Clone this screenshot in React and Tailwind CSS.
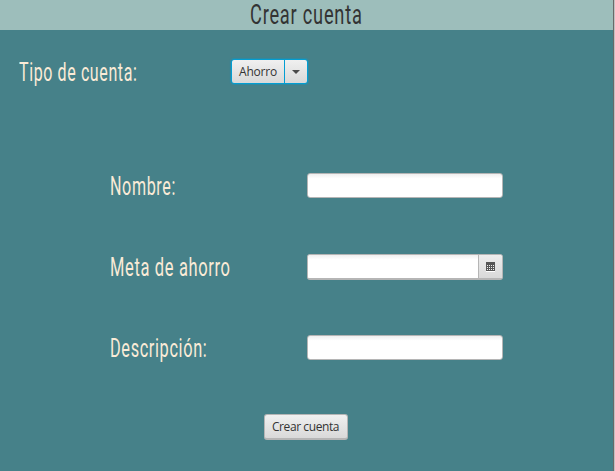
import React from "react";

const FIELD =
  "block h-[25px] w-[196px] rounded-[3px] border border-[#b5b5b5] bg-linear-to-b from-[#efefef] from-0% via-white via-20% to-white outline-none";

function Label({ children, scale }) {
  return (
    <span
      className={`inline-block origin-left whitespace-nowrap font-['Roboto',sans-serif] text-[26px] leading-[30px] tracking-[1px] text-[#faebd7] ${scale}`}
    >
      {children}
    </span>
  );
}

function CalendarIcon() {
  return (
    <svg width="9" height="10" viewBox="0 0 9 10" shapeRendering="crispEdges">
      <rect width="9" height="9" fill="#555" />
      <rect y="9" width="9" height="1" fill="#fff" />
      {[3, 5, 7].map((y) =>
        [1, 3, 5, 7].map((x) => (
          <rect key={`${x}-${y}`} x={x} y={y} width="1" height="1" fill="#eee" />
        ))
      )}
    </svg>
  );
}

function Row({ label, scale, children }) {
  return (
    <div className="flex h-[81px] items-start pl-[110px]">
      <div className="w-[197px] shrink-0">
        <Label scale={scale}>{label}</Label>
      </div>
      <div className="pt-[2px]">{children}</div>
    </div>
  );
}

export default function App() {
  return (
    <div className="flex h-[471px] w-[615px] bg-[#c0c0c0]">
      <main className="flex w-[614px] flex-col border-r border-[#696969] bg-[#468189]">
        <header className="flex h-[30px] shrink-0 bg-[#9dbebb] pl-[250px]">
          <h1 className="origin-left scale-x-[0.64] whitespace-nowrap font-['Roboto',sans-serif] text-[28.5px] leading-[30px] tracking-[1.2px] text-[#333]">
            Crear cuenta
          </h1>
        </header>

        <section className="flex h-[141px] shrink-0 items-start pl-[19px] pt-[27px]">
          <div className="w-[212px]">
            <Label scale="scale-x-[0.615]">Tipo de cuenta:</Label>
          </div>
          <button className="mt-[2px] flex h-[25px] w-[77px] rounded-[3px] border border-[#039ed3] bg-linear-to-b from-[#f0f0f0] to-[#d9d9d9] shadow-[0_0_1px_1px_rgba(3,158,211,0.35)]">
            <span className="w-[53px] border-r border-[#039ed3] pl-[7px] text-left font-['Open_Sans',sans-serif] text-[12px] leading-[24px] tracking-[-0.2px] text-[#333]">
              Ahorro
            </span>
            <span className="flex flex-1 items-center justify-center self-stretch pt-px">
              <svg width="8" height="4" viewBox="0 0 8 4">
                <path d="M0 0H8L4 4Z" fill="#4a4a4a" />
              </svg>
            </span>
          </button>
        </section>

        <form className="shrink-0">
          <Row label="Nombre:" scale="scale-x-[0.62]">
            <input className={FIELD} />
          </Row>
          <Row label="Meta de ahorro" scale="scale-x-[0.635]">
            <div className="flex h-[26px] w-[196px] overflow-hidden rounded-[3px] border border-b-2 border-[#b5b5b5] bg-white">
              <input className="w-[170px] bg-linear-to-b from-[#efefef] from-0% via-white via-20% to-white outline-none" />
              <button
                type="button"
                className="flex flex-1 items-center justify-center border-l border-[#b5b5b5] bg-linear-to-b from-[#ededed] to-[#d9d9d9]"
              >
                <CalendarIcon />
              </button>
            </div>
          </Row>
          <Row label="Descripción:" scale="scale-x-[0.628]">
            <input className={FIELD} />
          </Row>
        </form>

        <footer className="flex pl-[264px]">
          <button className="h-[26px] w-[84px] whitespace-nowrap rounded-[3px] border border-b-2 border-[#b5b5b5] bg-linear-to-b from-[#f0f0f0] to-[#d9d9d9] pr-px font-['Open_Sans',sans-serif] text-[12px] leading-[24px] tracking-[-0.4px] text-[#333]">
            Crear cuenta
          </button>
        </footer>
      </main>
    </div>
  );
}
